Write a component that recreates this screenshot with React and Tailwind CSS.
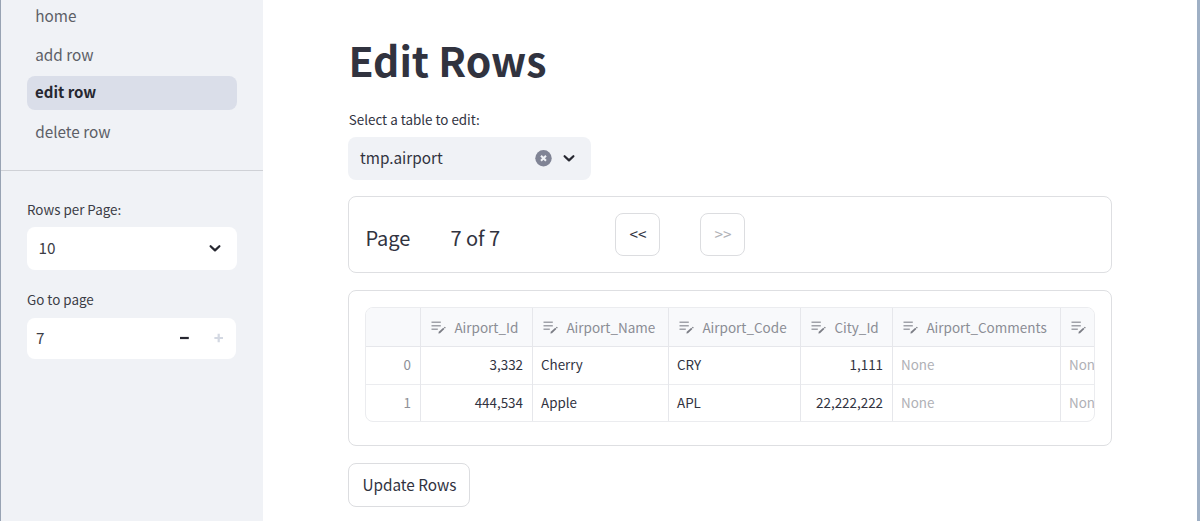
import React from "react";

const columns = [
  { name: "Airport_Id", width: "w-[112px]", numeric: true, values: ["3,332", "444,534"] },
  { name: "Airport_Name", width: "w-[136px]", values: ["Cherry", "Apple"] },
  { name: "Airport_Code", width: "w-[132px]", values: ["CRY", "APL"] },
  { name: "City_Id", width: "w-[92px]", numeric: true, values: ["1,111", "22,222,222"] },
  { name: "Airport_Comments", width: "w-[168px]", empty: true, values: ["None", "None"] },
  { name: "", width: "w-[60px]", empty: true, values: ["None", "None"] },
];

function EditIcon() {
  return (
    <svg className="h-[14px] w-[15px] shrink-0" viewBox="0 0 15 14" fill="none">
      <path d="M0.5 2.2H9.8M0.5 5.7H9.8M0.5 9.2H6.8" stroke="#a0a2a9" strokeWidth="1.5" />
      <path d="M7.4 13.4L7.8 11.8L12.3 7.8L13.4 9.1L9 13.2Z" fill="#7b7d85" />
      <path d="M12.9 7.5L13.8 6.7L14.8 7.7L13.9 8.5Z" fill="#7b7d85" />
    </svg>
  );
}

function Chevron() {
  return (
    <svg className="h-[9px] w-[12px] shrink-0" viewBox="0 0 12 9" fill="none">
      <path d="M1.6 2.2L6 6.4L10.4 2.2" stroke="#262730" strokeWidth="2.2" strokeLinecap="round" strokeLinejoin="round" />
    </svg>
  );
}

function NavItem({ label, active }) {
  return (
    <a
      className={
        active
          ? "flex h-[34px] items-center rounded-[8px] bg-[#dadee9] pb-px pl-[8px] text-[15px] font-bold text-[#262730]"
          : "flex h-[34px] items-center pb-px pl-[8.2px] text-[15.3px] text-[#5d5f67]"
      }
    >
      {label}
    </a>
  );
}

function Sidebar() {
  return (
    <aside className="flex w-[263px] shrink-0 flex-col border-l border-[#98a3b3] bg-[#f0f2f6]">
      <nav className="-mt-px flex flex-col gap-[4.6px] px-[26px]">
        <NavItem label="home" />
        <NavItem label="add row" />
        <NavItem label="edit row" active />
        <NavItem label="delete row" />
      </nav>
      <div className="mt-[21px] border-t border-[#cfd1d6]" />
      <div className="flex flex-col px-[26px] pt-[27px]">
        <label className="h-[22px] text-[13.4px] leading-[22px] text-[#3c3d46]">Rows per Page:</label>
        <div className="mt-[7px] flex h-[43px] items-center justify-between rounded-[8px] bg-white pr-[16.4px] pl-[11.4px] text-[15.3px] text-[#3c3d46]">
          <span className="pb-[2px]">10</span>
          <Chevron />
        </div>
        <label className="mt-[18px] h-[22px] text-[13.4px] leading-[22px] text-[#3c3d46]">Go to page</label>
        <div className="mt-[8px] mr-px flex h-[41px] items-center rounded-[8px] bg-white pr-[12px] pl-[9px] text-[15.3px] text-[#3c3d46]">
          <span className="grow pb-[2px]">7</span>
          <svg className="h-[10px] w-[45px]" viewBox="0 0 45 10" fill="none">
            <path d="M1 5H9.8" stroke="#262730" strokeWidth="2.2" />
            <path d="M35.4 5H44M39.7 0.7V9.3" stroke="#d3d8e2" strokeWidth="2.2" />
          </svg>
        </div>
      </div>
    </aside>
  );
}

function DataTable() {
  return (
    <div className="h-[115px] overflow-hidden rounded-[8px] border border-[#ebecef] text-[13.4px]">
      <div className="flex w-max">
        <div className="flex w-[55px] flex-col border-r border-[#e6e7eb] text-right text-[#8e9097]">
          <div className="h-[39px] border-b border-[#e6e7eb] bg-[#f8f9fb]" />
          <div className="h-[38px] border-b border-[#ebecef] pr-[9.4px] leading-[35px]">0</div>
          <div className="h-[37px] pr-[9.4px] leading-[35px]">1</div>
        </div>
        {columns.map((col, i) => (
          <div key={i} className={`${col.width} flex flex-col border-r border-[#e6e7eb] ${col.empty ? "text-[#b0b1b6]" : "text-[#31333f]"} ${col.numeric ? "text-right" : ""}`}>
            <div className="flex h-[39px] items-center gap-[8px] border-b border-[#e6e7eb] bg-[#f8f9fb] pl-[10px] text-[13.5px] text-[#8b8d95]">
              <EditIcon />
              <span>{col.name}</span>
            </div>
            <div className="h-[38px] border-b border-[#ebecef] pr-[9.4px] pl-[7.6px] leading-[35px]">{col.values[0]}</div>
            <div className="h-[37px] pr-[9.4px] pl-[7.6px] leading-[35px]">{col.values[1]}</div>
          </div>
        ))}
      </div>
    </div>
  );
}

export default function App() {
  return (
    <div className="flex h-[521px] overflow-hidden bg-white font-['Noto_Sans_CJK_SC','Open_Sans',sans-serif] text-[#31333f]">
      <Sidebar />
      <main className="flex grow flex-col items-start border-r-[3px] border-[#9fb0c5] pl-[85.4px]">
        <h1 className="mt-[33px] h-[54px] text-[40.9px] leading-[54px] font-bold whitespace-nowrap">Edit Rows</h1>
        <label className="mt-[21px] h-[22px] pl-[0.4px] text-[13.4px] leading-[22px]">Select a table to edit:</label>
        <div className="mt-[6.6px] flex h-[43px] w-[242.6px] items-center rounded-[8px] bg-[#f0f2f6] pr-[16px] pl-[11.6px] text-[15.3px]">
          <span className="grow pb-px">tmp.airport</span>
          <svg className="mr-[11px] h-[17px] w-[17px]" viewBox="0 0 17 17" fill="none">
            <circle cx="8.5" cy="8.3" r="8.2" fill="#808495" />
            <path d="M6 5.8L11 10.8M11 5.8L6 10.8" stroke="#f0f2f6" strokeWidth="2" />
          </svg>
          <Chevron />
        </div>
        <section className="mt-[16.4px] flex h-[77px] w-[764px] items-start rounded-[8px] border border-[#dedfe2] pt-[15.6px] pl-[16px] text-[20px]">
          <span className="mt-[10px] w-[85px] leading-[30px]">Page</span>
          <span className="mt-[10px] w-[165px] leading-[30px]">7 of 7</span>
          <button className="h-[43px] w-[45px] rounded-[8px] border border-[#dcdde0] pb-px text-[15.3px]">&lt;&lt;</button>
          <button className="ml-[40px] h-[43px] w-[45px] rounded-[8px] border border-[#dcdde0] pb-px text-[15.3px] text-[#b0b1b6]">&gt;&gt;</button>
        </section>
        <section className="mt-[17px] h-[156px] w-[764px] rounded-[8px] border border-[#dedfe2] px-[16px] pt-[16px]">
          <DataTable />
        </section>
        <button className="mt-[17px] h-[44px] w-[122px] rounded-[8px] border border-[#dcdde0] pb-[2px] text-[15.3px]">Update Rows</button>
      </main>
    </div>
  );
}
